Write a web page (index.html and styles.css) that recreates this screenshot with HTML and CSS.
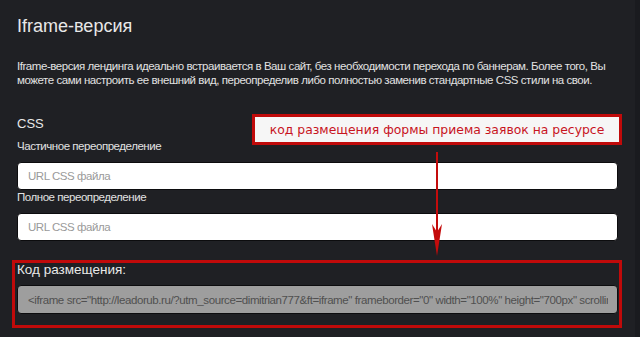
FILE: index.html
```html
<!DOCTYPE html>
<html lang="ru">
<head>
    <meta charset="UTF-8">
    <meta name="viewport" content="width=device-width, initial-scale=1.0">
    <title>Iframe-версия</title>
    <link rel="stylesheet" href="styles.css">
</head>
<body>
    <div class="page">
        <h1>Iframe-версия</h1>
        <p class="intro">Iframe-версия лендинга идеально встраивается в Ваш сайт, без необходимости перехода по баннерам. Более того, Вы можете сами настроить ее внешний вид, переопределив либо полностью заменив стандартные CSS стили на свои.</p>

        <h3>CSS</h3>
        <label class="field-label">Частичное переопределение</label>
        <input type="text" class="field" placeholder="URL CSS файла" />
        <label class="field-label">Полное переопределение</label>
        <input type="text" class="field" placeholder="URL CSS файла" />

        <div class="embed-box">
            <h4>Код размещения:</h4>
            <input type="text" class="field code" readonly value='<iframe src="http://leadorub.ru/?utm_source=dimitrian777&ft=iframe" frameborder="0" width="100%" height="700px" scrolling="no"></iframe>' />
        </div>

        <div class="callout">код размещения формы приема заявок на ресурсе</div>
        <svg class="arrow" width="10" height="104" viewBox="0 0 10 104">
            <line x1="5" y1="0" x2="5" y2="90" stroke="#c40c0c" stroke-width="2" />
            <polygon points="0,72 5,80 10,72 5,104" fill="#c40c0c" />
        </svg>
    </div>
</body>
</html>
```

FILE: styles.css
```css
body {
    margin: 0;
    background-color: #1a1b1f;
    font-family: "Liberation Sans", Arial, sans-serif;
    color: #e2e2e2;
}
.page {
    position: relative;
    width: 635px;
    height: 337px;
    box-sizing: border-box;
    padding: 16px 17px 0 17px;
    background-color: #1f2024;
    overflow: hidden;
}
h1 {
    margin: 0;
    font-size: 18px;
    line-height: 20px;
    font-weight: normal;
    color: #e8e8e8;
}
.intro {
    margin: 23px 0 0 0;
    font-size: 11.5px;
    letter-spacing: -0.45px;
    line-height: 14px;
}
h3 {
    margin: 29px 0 0 0;
    font-size: 13px;
    line-height: 16px;
    font-weight: normal;
    color: #e8e8e8;
}
.field-label {
    display: block;
    margin-top: 7px;
    margin-bottom: 9px;
    font-size: 11.5px;
    letter-spacing: -0.45px;
    line-height: 14px;
}
.field + .field-label {
    margin-top: 0;
}
.field {
    display: block;
    width: 100%;
    height: 28px;
    box-sizing: border-box;
    margin: 0;
    padding: 0 10px;
    border: 1px solid #0c0c0e;
    border-radius: 4px;
    background: #ffffff;
    font-family: "Liberation Sans", Arial, sans-serif;
    font-size: 11.5px;
    letter-spacing: -0.45px;
    color: #555;
}
.field::placeholder {
    color: #9a9a9a;
}
.embed-box {
    margin: 19px -4px 0 -5px;
    padding: 0 1px 11px 2px;
    border: 3px solid #c00a0a;
}
h4 {
    margin: 0;
    font-size: 13.5px;
    line-height: 14px;
    font-weight: normal;
    color: #e8e8e8;
}
.field.code {
    margin-top: 8px;
    height: 29px;
    padding-right: 9px;
    background: #9e9e9e;
    letter-spacing: -0.4px;
    color: #505050;
}
.callout {
    position: absolute;
    left: 252px;
    top: 114px;
    width: 370px;
    height: 31px;
    box-sizing: border-box;
    border: 3px solid #c00a0a;
    background: #f6f6f6;
    color: #c8141e;
    font-family: "DejaVu Sans", Verdana, sans-serif;
    font-size: 12.4px;
    line-height: 25px;
    text-align: center;
}
.arrow {
    position: absolute;
    left: 432px;
    top: 152px;
}
```
